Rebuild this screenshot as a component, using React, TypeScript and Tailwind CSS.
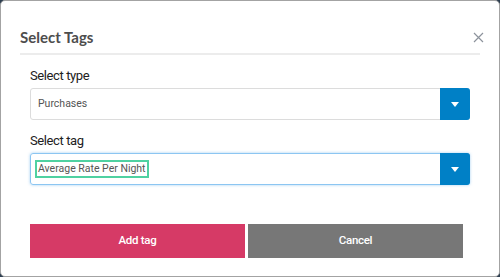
import { useState } from 'react';

function Caret() {
  return (
    <svg width="8" height="5" viewBox="0 0 8 5" className="block">
      <path d="M0 0h8L4 5z" fill="#fff" />
    </svg>
  );
}

interface SelectBoxProps {
  value: string;
  focused?: boolean;
}

function SelectBox({ value, focused }: SelectBoxProps) {
  return (
    <div
      className={
        focused
          ? 'flex h-[32px] rounded-[3px] border border-[#8cc6f2] shadow-[0_0_3px_rgba(102,175,233,0.6)]'
          : 'flex h-[32px] rounded-[3px] border border-[#dcdcdc]'
      }
      style={{ fontFamily: 'Roboto, Arial, sans-serif' }}
    >
      <div className="flex flex-1 items-center pl-[4px]">
        {focused ? (
          <span className="border-2 border-[#4fd1a1] px-[1px] text-[10.5px] leading-[14px] text-[#555]">
            {value}
          </span>
        ) : (
          <span className="pl-[3px] text-[10.5px] text-[#555]">{value}</span>
        )}
      </div>
      <div className="-my-px -mr-px flex w-[30px] items-center justify-center rounded-r-[3px] bg-[#0080c6]">
        <Caret />
      </div>
    </div>
  );
}

export default function App() {
  const [type] = useState('Purchases');
  const [tag] = useState('Average Rate Per Night');

  return (
    <div className="h-[277px] w-[500px] bg-[#2d3e50]" style={{ fontFamily: 'Roboto, Arial, sans-serif' }}>
      <div className="flex h-full w-full flex-col rounded-[5px] border border-[#a3a3a3] bg-white">
        {/* Header */}
        <div className="mx-[19px] flex items-center justify-between border-b-2 border-[#ececec] pt-[26px] pb-[6px]">
          <h2
            className="text-[15px] leading-[20px] font-bold text-[#4d4d4d]"
            style={{ fontFamily: 'Lato, "Open Sans", sans-serif' }}
          >
            Select Tags
          </h2>
          <svg width="11" height="11" viewBox="0 0 11 11" className="mr-[-4px]">
            <path d="M1 1l9 9M10 1l-9 9" stroke="#8d939c" strokeWidth="1.2" />
          </svg>
        </div>

        {/* Body */}
        <div className="mx-[29px] mt-[13px] flex flex-col">
          <label className="mb-[4px] text-[13px] leading-[16px] tracking-[-0.4px] text-[#222]">Select type</label>
          <SelectBox value={type} />
          <label className="mt-[13px] mb-[4px] text-[13px] leading-[16px] tracking-[-0.4px] text-[#222]">
            Select tag
          </label>
          <SelectBox value={tag} focused />

          {/* Actions */}
          <div className="mt-[39px] flex gap-[3px] pr-[7px]">
            <button className="h-[34px] flex-1 bg-[#d63a66] text-[11.5px] font-medium tracking-[-0.3px] text-white">
              Add tag
            </button>
            <button className="h-[34px] flex-1 bg-[#777777] text-[11.5px] font-medium tracking-[-0.3px] text-white">
              Cancel
            </button>
          </div>
        </div>
      </div>
    </div>
  );
}
